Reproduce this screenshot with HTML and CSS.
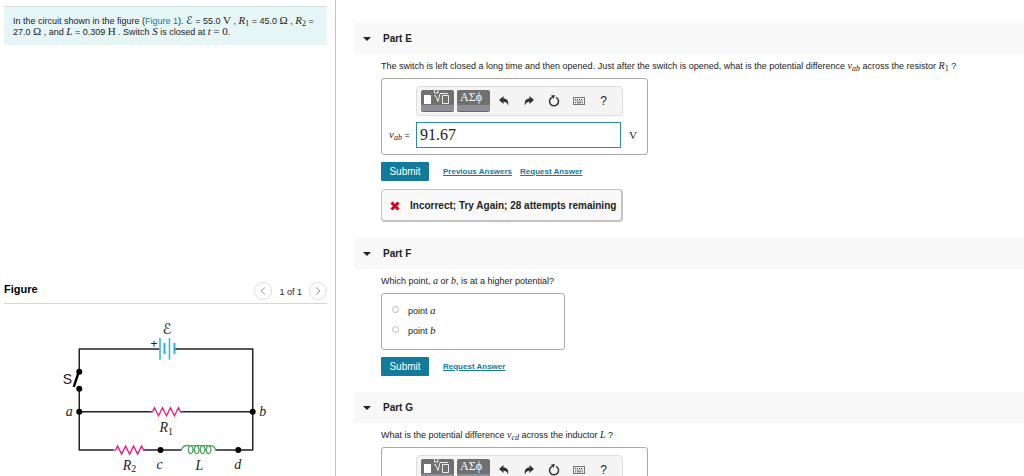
FILE: index.html
```html
<!DOCTYPE html>
<html lang="en">
<head>
<meta charset="utf-8">
<title>Circuit problem</title>
<link rel="stylesheet" href="styles.css">
</head>
<body>
<svg class="defs" aria-hidden="true">
  <symbol id="i-template" viewBox="0 0 33 22">
    <rect x="3" y="5" width="7" height="9" fill="#fff"/>
    <path d="M13 6l1.500-.5 2.500 6L19 3.500h8M13.500 0v3h3.500V0M21.500 5.500h6v8h-6z" fill="none" stroke="#eee"/>
  </symbol>
  <symbol id="i-undo" viewBox="0 0 10 10"><path d="M0 4L4.500 0v2.500C8 2.500 10 5 9 9.500 8 6.500 6.500 5.800 4.500 5.800V8z" fill="#333"/></symbol>
  <symbol id="i-redo" viewBox="0 0 10 10"><path d="M10 4L5.500 0v2.500C2 2.500 0 5 1 9.500 2 6.500 3.500 5.800 5.500 5.800V8z" fill="#333"/></symbol>
  <symbol id="i-reset" viewBox="0 0 12 12"><path d="M8 2.300A4.500 4.500 0 1 1 4.500 2.100" fill="none" stroke="#333" stroke-width="1.500"/><path d="M3 .5L7 0 5.500 4z" fill="#333"/></symbol>
  <symbol id="i-keys" viewBox="0 0 12 8"><rect x=".5" y=".5" width="11" height="7" fill="#eee" stroke="#777"/><path d="M2 2.500h8M2.500 4h8" stroke="#444" stroke-dasharray="1 1"/><path d="M2 5.800h1M4 5.800h4M9 5.800h1" stroke="#555"/></symbol>
</svg>
<div class="page">
  <aside class="side">
    <p class="intro">In the circuit shown in the figure (<a href="#figure">Figure 1</a>). <span class="emf">ℰ</span> = 55.0 <span class="m">V</span> , <i>R</i><sub>1</sub> = 45.0 <span class="m">Ω</span> , <i>R</i><sub>2</sub> =<br>27.0 <span class="m">Ω</span> , and <i>L</i> = 0.309 <span class="m">H</span> . Switch <i>S</i> is closed at <i>t</i> <span class="m">= 0</span>.</p>
    <section class="figure" id="figure">
      <header class="figure-head">
        <h2>Figure</h2>
        <nav class="pager">
          <button type="button" aria-label="Previous figure"><svg viewBox="0 0 6 8"><path d="M5 .5L1 4l4 3.500"/></svg></button>
          <span>1 of 1</span>
          <button type="button" aria-label="Next figure"><svg viewBox="0 0 6 8"><path d="M1 .5L5 4 1 7.500"/></svg></button>
        </nav>
      </header>
      <svg class="circuit" viewBox="0 316 324 161" role="img" aria-label="Circuit diagram">
        <g fill="none" stroke="#222" stroke-width="1.500">
          <path d="M156 349H75.500V371M75.500 389V450.500H110M171 349H249.500V450.500H212M75.500 412H148M177 412H249.500M140 450.500H178"/>
          <path d="M75 372L70 387" stroke="#000" stroke-width="2.500"/>
        </g>
        <g fill="none" stroke="#26b4e8">
          <path d="M156.500 338v22M166 338v22" stroke-width="1.500"/>
          <path d="M161 343v11M171 343v11" stroke-width="2"/>
        </g>
        <g fill="none" stroke="#e6218c" stroke-width="1.400">
          <path d="M147 412h2l2-4 4 8 4-8 4 8 4-8 4 8 4-8 2 4h2"/>
          <path d="M110 450.500h2l2-4 4 8 4-8 4 8 4-8 4 8 4-8 2 4h2"/>
        </g>
        <path d="M178 450.500C179 446 182 445.500 186 446C191 446 190 454 187.500 454C184 454 184 446 188 446H192C197 446 196 454 193.500 454C190 454 190 446 194 446H198C203 446 202 454 199.500 454C196 454 196 446 200 446H204C209 446 208 454 205.500 454C202 454 202 446 206 446C210 446 212 448 212 450.500" fill="none" stroke="#4fa562" stroke-width="1.300"/>
        <g fill="#000"><circle cx="75.500" cy="372" r="3"/><circle cx="75.500" cy="389" r="3"/><circle cx="75.500" cy="412" r="3"/><circle cx="249.500" cy="412" r="3"/><circle cx="157" cy="450.500" r="3"/><circle cx="235" cy="450.500" r="3"/></g>
        <g class="labels">
          <text class="emf-label" x="159" y="334">ℰ</text>
          <text class="up" x="147" y="348">+</text>
          <text class="sans" x="59" y="384">S</text>
          <text x="62" y="416">a</text>
          <text x="256" y="416">b</text>
          <text x="156" y="432">R<tspan class="sub" dy="3">1</tspan></text>
          <text x="119" y="470">R<tspan class="sub" dy="3">2</tspan></text>
          <text x="153" y="469">c</text>
          <text x="192" y="470">L</text>
          <text x="231" y="469">d</text>
        </g>
      </svg>
    </section>
  </aside>

  <main class="parts">
    <section class="part">
      <h2 class="part-head">Part E</h2>
      <div class="part-body">
        <p class="question">The switch is left closed a long time and then opened. Just after the switch is opened, what is the potential difference <i>v<sub>ab</sub></i> across the resistor <i>R</i><sub>1</sub> ?</p>
        <div class="answer">
          <div class="toolbar">
            <button type="button" class="key" aria-label="Templates"><svg><use href="#i-template"/></svg></button>
            <button type="button" class="key">ΑΣϕ</button>
            <button type="button" class="tool" aria-label="Undo"><svg class="s10"><use href="#i-undo"/></svg></button>
            <button type="button" class="tool" aria-label="Redo"><svg class="s10"><use href="#i-redo"/></svg></button>
            <button type="button" class="tool" aria-label="Reset"><svg class="s12"><use href="#i-reset"/></svg></button>
            <button type="button" class="tool" aria-label="Keyboard shortcuts"><svg class="kb"><use href="#i-keys"/></svg></button>
            <button type="button" class="tool">?</button>
          </div>
          <label for="vab"><i>v<sub>ab</sub></i> =</label>
          <input id="vab" class="value" type="text" value="91.67">
          <span class="unit">V</span>
        </div>
        <div class="actions">
          <button type="button" class="submit">Submit</button>
          <a href="#previous">Previous Answers</a>
          <a href="#request-e">Request Answer</a>
        </div>
        <div class="feedback">
          <svg viewBox="0 0 10 10"><path d="M1.500 1.500l7 7M8.500 1.500l-7 7" stroke="#d6001f" stroke-width="3"/></svg>
          Incorrect; Try Again; 28 attempts remaining
        </div>
      </div>
    </section>

    <section class="part">
      <h2 class="part-head">Part F</h2>
      <div class="part-body">
        <p class="question">Which point, <i>a</i> or <i>b</i>, is at a higher potential?</p>
        <div class="choices">
          <label><input type="radio" name="point"><span>point <i>a</i></span></label>
          <label><input type="radio" name="point"><span>point <i>b</i></span></label>
        </div>
        <div class="actions">
          <button type="button" class="submit">Submit</button>
          <a href="#request-f">Request Answer</a>
        </div>
      </div>
    </section>

    <section class="part">
      <h2 class="part-head">Part G</h2>
      <div class="part-body">
        <p class="question">What is the potential difference <i>v<sub>cd</sub></i> across the inductor <i>L</i> ?</p>
        <div class="answer">
          <div class="toolbar">
            <button type="button" class="key" aria-label="Templates"><svg><use href="#i-template"/></svg></button>
            <button type="button" class="key">ΑΣϕ</button>
            <button type="button" class="tool" aria-label="Undo"><svg class="s10"><use href="#i-undo"/></svg></button>
            <button type="button" class="tool" aria-label="Redo"><svg class="s10"><use href="#i-redo"/></svg></button>
            <button type="button" class="tool" aria-label="Reset"><svg class="s12"><use href="#i-reset"/></svg></button>
            <button type="button" class="tool" aria-label="Keyboard shortcuts"><svg class="kb"><use href="#i-keys"/></svg></button>
            <button type="button" class="tool">?</button>
          </div>
        </div>
      </div>
    </section>
  </main>
</div>
</body>
</html>
```
FILE: styles.css
```css
* { box-sizing: border-box; }
body {
  margin: 0;
  height: 100vh;
  overflow: hidden;
  background: #fff;
  color: #222;
  font: 9px/11px "Liberation Sans", Arial, sans-serif;
}
h2, p { margin: 0; }
button { padding: 0; border: 0; font: inherit; color: inherit; }
svg { display: block; }
a { color: #127a9b; }
i, .m { font-family: "Liberation Serif", "DejaVu Serif", serif; font-size: 11px; line-height: 0; }
.question i { font-size: 10px; }
sub { font-family: "Liberation Serif", serif; font-size: 8px; line-height: 0; vertical-align: -2px; }
.emf { font-family: "DejaVu Sans", sans-serif; font-size: 11px; line-height: 0; }
.defs { display: none; }

.page {
  display: grid;
  grid-template-columns: 21fr 43fr;
  height: 100%;
}
.side {
  display: flex;
  flex-direction: column;
  justify-content: space-between;
  min-width: 0;
  padding: 6px 8px 0 4px;
  border-right: 1px solid #b4c6dc;
}
.intro {
  padding: 9px 0 7px 9px;
  border-top: 1px solid #d5dfdf;
  background: #e6f5f6;
  white-space: nowrap;
}
.intro a { text-decoration: none; }

.figure-head {
  display: flex;
  justify-content: space-between;
  padding-bottom: 3px;
  border-bottom: 1px solid #d6d6d6;
}
.figure-head h2 { font-size: 11px; line-height: 14px; color: #000; }
.pager { display: flex; align-items: center; gap: 7px; }
.pager span { padding-top: 4px; }
.pager button {
  display: grid;
  place-items: center;
  width: 18px;
  height: 18px;
  border: 1px solid #ddd;
  border-radius: 50%;
  background: #fff;
}
.pager svg { width: 6px; height: 8px; fill: none; stroke: #999; }
.circuit { width: 100%; margin-top: 12px; }
.labels { font: italic 14px "Liberation Serif", "DejaVu Serif", serif; fill: #222; }
.labels .emf-label { font: 15px "DejaVu Sans", sans-serif; }
.labels .up { font: 12px "Liberation Sans", sans-serif; }
.labels .sans { font: 14px "Liberation Sans", sans-serif; }
.labels .sub { font-style: normal; font-size: 10px; }

.parts {
  min-width: 0;
  padding: 23px 0 0 18px;
  overflow: hidden;
}
.part { margin-bottom: 16px; }
.part-head {
  display: flex;
  align-items: center;
  gap: 12px;
  height: 31px;
  padding-left: 9px;
  background: #f8f8f8;
  font-size: 10px;
}
.part-head::before {
  content: "";
  border: solid transparent;
  border-width: 4px 4px 0;
  border-top-color: #222;
}
.part-body { padding: 6px 0 0 27px; }
.question { line-height: 13px; margin-bottom: 5px; white-space: nowrap; }

.answer {
  display: grid;
  grid-template-columns: 27px 205px auto;
  row-gap: 6px;
  align-items: center;
  width: 267px;
  padding: 7px 7px 6px;
  border: 1px solid #aaa;
  border-radius: 3px;
}
.answer label { white-space: nowrap; }
.toolbar {
  display: flex;
  align-items: center;
  grid-column: 2 / 4;
  width: 207px;
  height: 30px;
  padding-left: 4px;
  border: 1px solid #ddd;
  border-radius: 4px;
  background: #f4f4f4;
}
.key {
  width: 33px;
  height: 22px;
  padding: 0 3px 7px;
  overflow: hidden;
  border-radius: 2px;
  border-bottom: 1px solid #666;
  background: linear-gradient(#707070 0 70%, #8e8d98 70%);
  color: #fff;
  font: 12px/14px "Liberation Serif", "DejaVu Serif", serif;
  text-align: left;
}
.key + .key { margin: 0 1px 0 3px; }
.key svg { width: 33px; height: 22px; margin: 0 -3px -7px; }
.tool {
  display: grid;
  place-items: center;
  width: 25px;
  height: 22px;
  background: none;
  font-size: 12px;
}
.s10 { width: 10px; height: 10px; }
.s12 { width: 12px; height: 12px; }
.kb { width: 12px; height: 8px; }
.value {
  width: 100%;
  height: 26px;
  padding: 0 3px;
  border: 1px solid #2c8dab;
  background: #fff;
  color: #222;
  font: 16px "Liberation Serif", serif;
}
.unit { padding-left: 8px; font: 11px "Liberation Serif", serif; }

.actions { display: flex; align-items: center; gap: 8px; margin-top: 7px; font-size: 8px; font-weight: bold; }
.submit {
  width: 48px;
  height: 19px;
  margin-right: 6px;
  border-radius: 1px;
  background: #127a9b;
  color: #fff;
  font-size: 10px;
  font-weight: normal;
}
.feedback {
  display: flex;
  align-items: center;
  gap: 10px;
  width: fit-content;
  height: 33px;
  margin-top: 8px;
  padding: 1px 5px 0 8px;
  border: 1px solid #c4c4c4;
  border-right-width: 2px;
  border-bottom-width: 2px;
  border-radius: 4px;
  background: #f9f9f9;
  font-size: 10px;
  font-weight: bold;
}
.feedback svg { width: 10px; height: 10px; }
.choices {
  display: flex;
  flex-direction: column;
  gap: 9px;
  width: 184px;
  padding: 12px 10px;
  border: 1px solid #aaa;
  border-radius: 3px;
}
.choices label { display: flex; gap: 9px; height: 11px; }
.choices span { line-height: 11px; }
.choices input {
  appearance: none;
  width: 7px;
  height: 7px;
  margin: 0;
  border: 1px solid #bbb;
  border-radius: 50%;
}
```
